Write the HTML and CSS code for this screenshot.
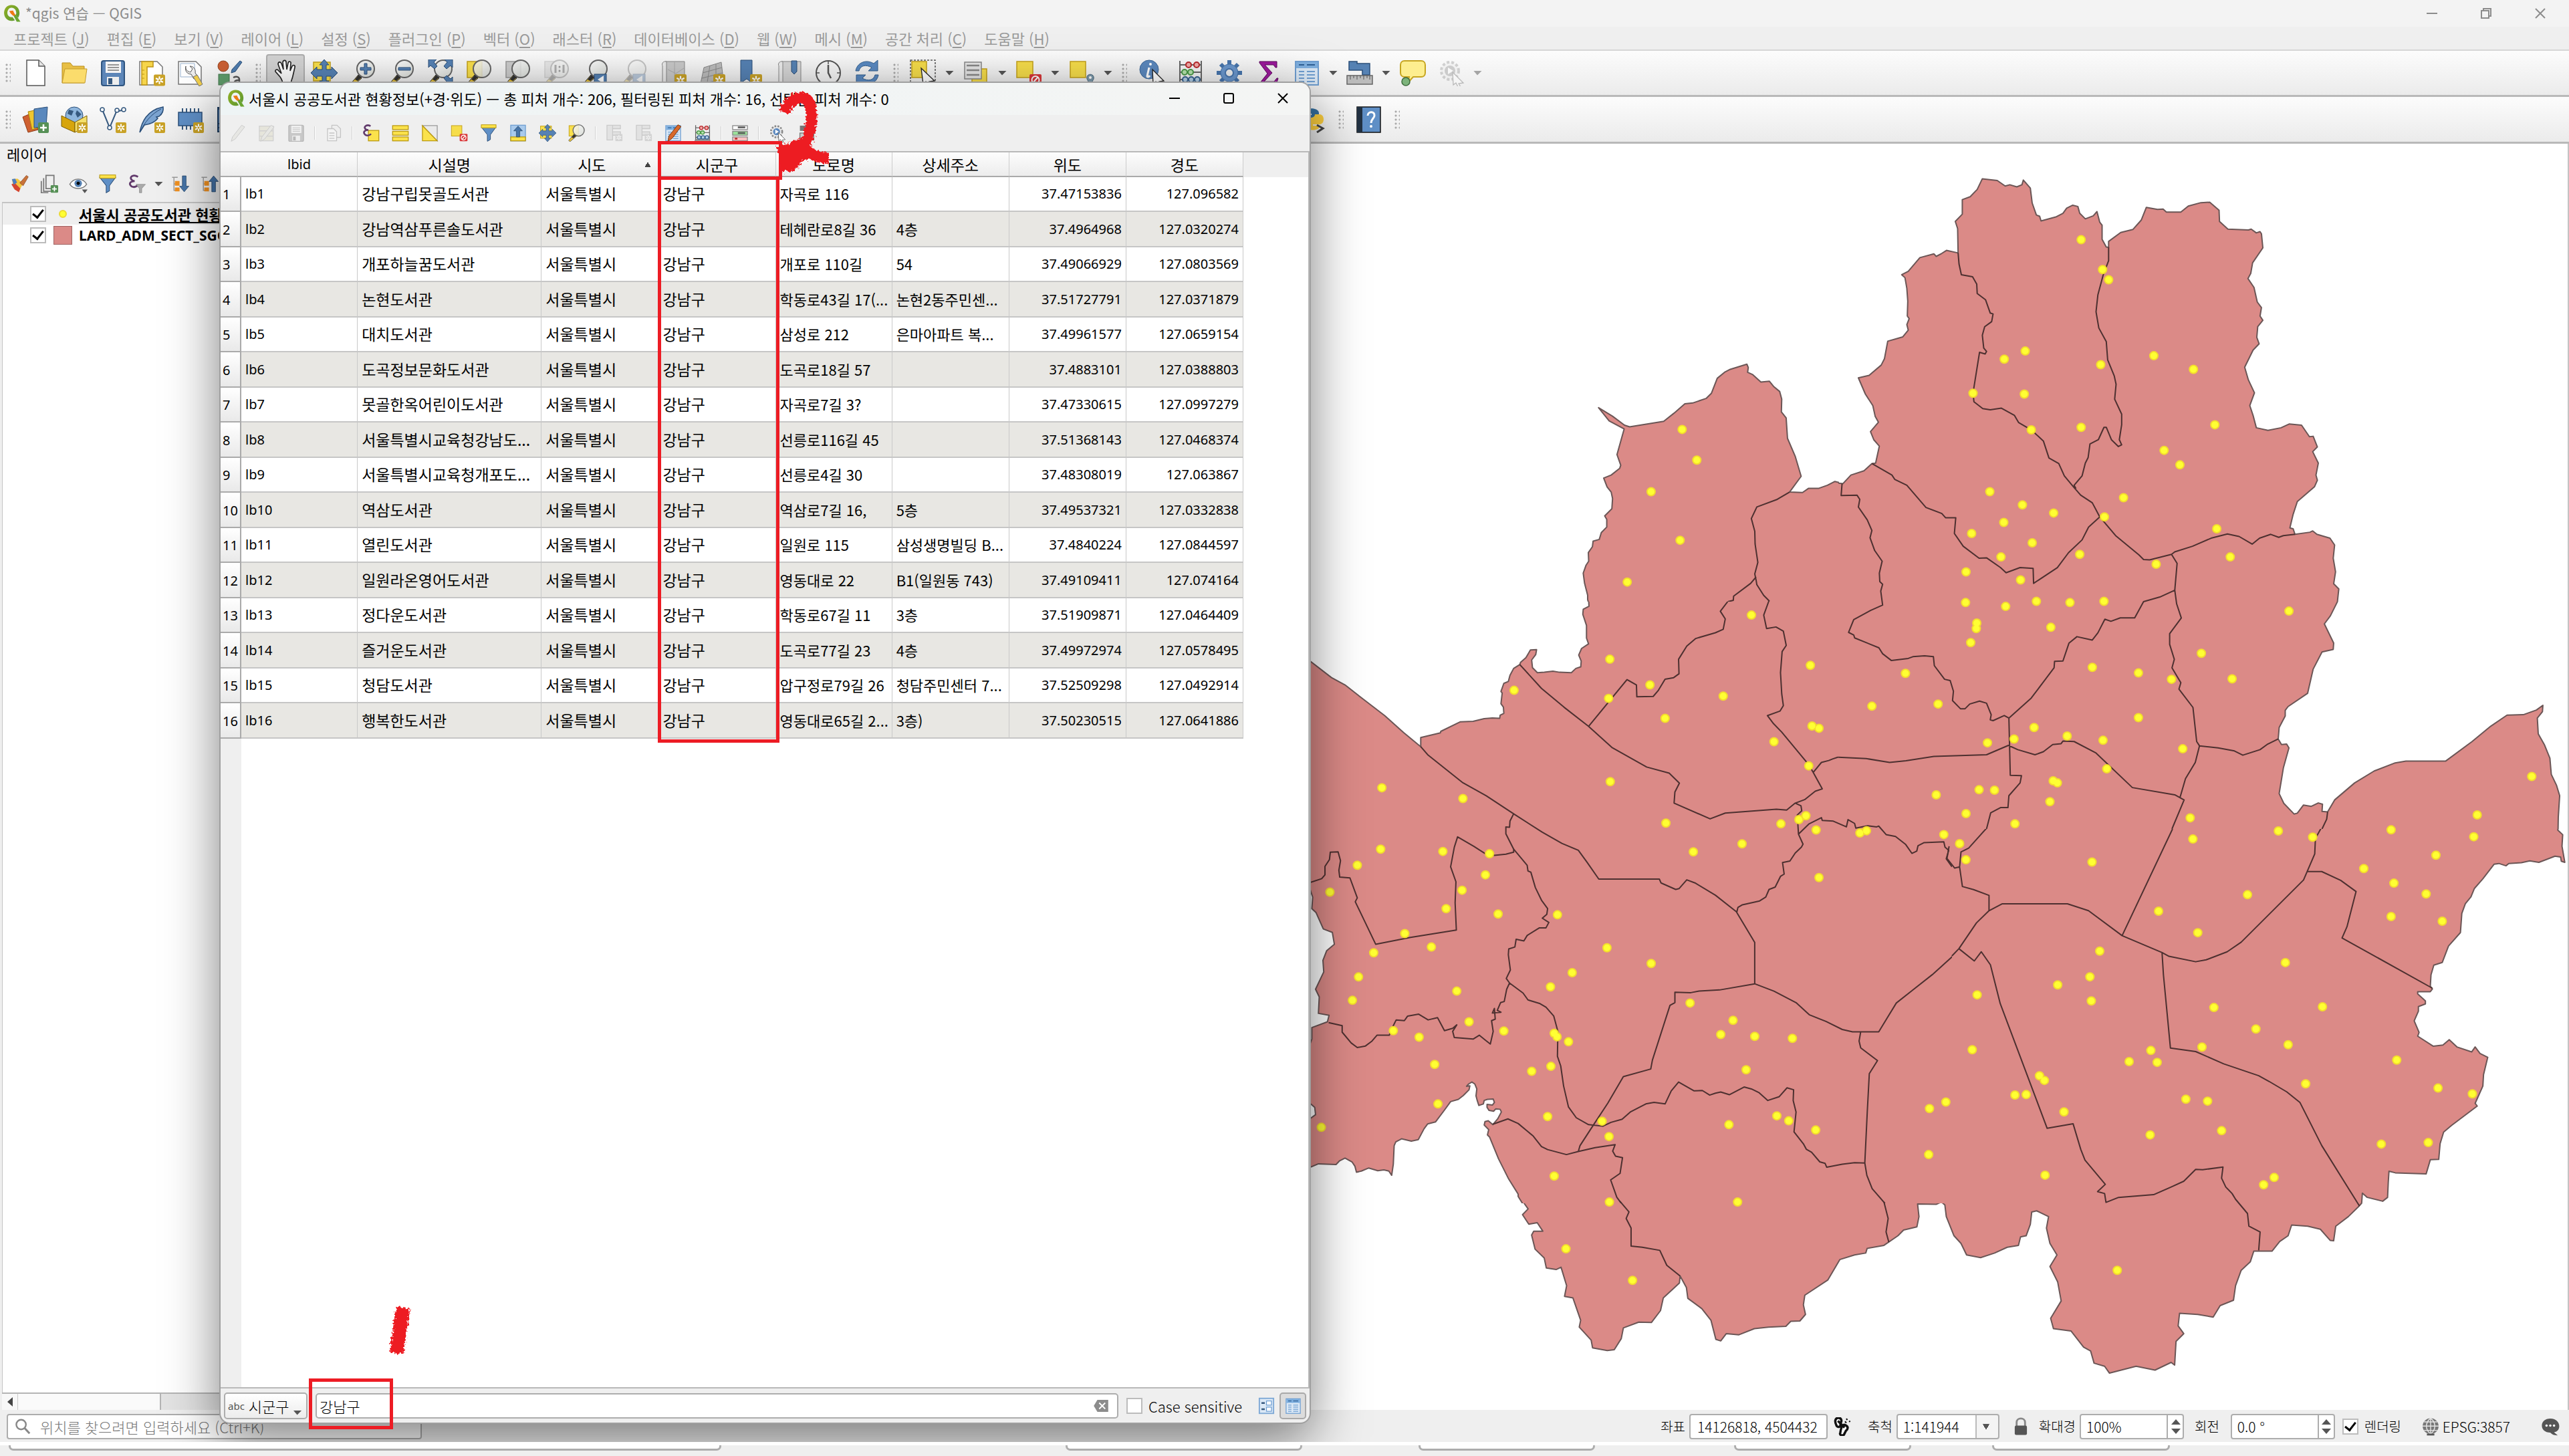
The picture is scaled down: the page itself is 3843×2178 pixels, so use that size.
FILE: index.html
```html
<!DOCTYPE html>
<html lang="ko">
<head>
<meta charset="utf-8">
<title>*qgis 연습 — QGIS</title>
<link rel="stylesheet" href="styles.css">
</head>
<body>
<svg class="sprite" aria-hidden="true">
  <defs>
    <linearGradient id="g-lens" x1="0" y1="0" x2="1" y2="1"><stop offset="0" stop-color="#fdfdfd"/><stop offset="1" stop-color="#d5d9d3"/></linearGradient>
    <linearGradient id="g-q" x1="0" y1="0" x2="1" y2="1"><stop offset="0" stop-color="#93b023"/><stop offset="1" stop-color="#589632"/></linearGradient>
    <filter id="chalk" x="-20%" y="-20%" width="140%" height="140%"><feTurbulence type="fractalNoise" baseFrequency="0.3" numOctaves="2" seed="4" result="n"/><feDisplacementMap in="SourceGraphic" in2="n" scale="9"/></filter>
    <symbol id="q" viewBox="0 0 40 40"><path d="M19 2C9 2 3 10 3 19s6 17 16 17c3 0 5-.500 7-1.500L21 28c-6 1-11-3-11-9s4-11 9-11 10 4 10 11c0 2-.4 3-1 4.500l5 6C35 26 36 23 36 19 36 9 29 2 19 2z" fill="url(#g-q)"/><path d="M22 23h6l10 15h-8z" fill="#6aa52f"/><path d="M14 15l8-1 3 6 3 4-6 1-5-5z" fill="#ee7913"/></symbol>
    <symbol id="star" viewBox="0 0 16 16"><rect width="16" height="16" rx="2" fill="#c9a227"/><path d="M8 2.500v11M3 5.200l10 5.600M13 5.200L3 10.800" stroke="#fff" stroke-width="2"/><circle cx="8" cy="8" r="1.500" fill="#c9a227"/></symbol>
    <symbol id="new" viewBox="0 0 40 40"><path d="M7 1h18l9 9v29H7z" fill="#fff" stroke="#555" stroke-width="1.500"/><path d="M25 1v9h9" fill="#e4e4e4" stroke="#555" stroke-width="1.500"/></symbol>
    <symbol id="open" viewBox="0 0 40 40"><path d="M2 35V5h12l4 5h17v25z" fill="#e8bf45" stroke="#b98d1d"/><path d="M2 35l4-21h33l-3 21z" fill="#fbdc6c" stroke="#c49b2c"/></symbol>
    <symbol id="save" viewBox="0 0 40 40"><rect x="3" y="2" width="34" height="37" rx="3" fill="#5d86b8" stroke="#2f5580" stroke-width="2"/><rect x="9" y="3" width="23" height="17" fill="#f4f4f4"/><path d="M12 8h17M12 12h17M12 16h17" stroke="#777" stroke-width="1.500"/><rect x="11" y="26" width="18" height="12" fill="#eee"/><rect x="13" y="28" width="6" height="9" fill="#36597f"/></symbol>
    <symbol id="layout" viewBox="0 0 40 40"><path d="M2 3h26l8 8v27H2z" fill="#fff" stroke="#777" stroke-width="1.500"/><path d="M5 3h17v8H13v27H5z" fill="#f6d54a" stroke="#bd9415" stroke-width="1.500"/><path d="M5 16h4M5 22h4M5 28h4" stroke="#bd9415"/><use href="#star" x="23" y="22" width="17" height="18"/></symbol>
    <symbol id="manager" viewBox="0 0 40 40"><path d="M2 3h26l8 8v26H2z" fill="#fff" stroke="#777" stroke-width="1.500"/><path d="M5 6h21v20H5z" fill="none" stroke="#9bb3cf"/><path d="M13 10c-1 6 3 8 7 9l3-5-4-4c6 0 9 5 8 10l4 6-6 3-4-7c-6 0-10-5-8-12z" fill="#eee" stroke="#555"/><path d="M24 26l6-3 8 14-5 3z" fill="#f3d04b" stroke="#777"/></symbol>
    <symbol id="style" viewBox="0 0 40 40"><circle cx="11" cy="10" r="8" fill="#cb5f33" stroke="#93431f"/><path d="M36 2l3 2-10 14-6 2 1-5z" fill="#4f7db0" stroke="#2b4f79"/><rect x="4" y="22" width="16" height="16" fill="#5f9c6b" stroke="#41744b"/><path d="M26 27c6-3 9 0 9 3v8M35 31c-9-1-9 7-4 6 3 0 4-2 4-3" fill="none" stroke="#555" stroke-width="2.500"/></symbol>
    <symbol id="pan" viewBox="0 0 40 40"><path d="M12 26L5 18c-1-3 3-4 5-1l4 4L9 7c0-4 4-4 5-1l3 9-1-11c1-4 5-3 5 0l1 11 2-10c1-3 5-2 4 1l-1 11 3-7c2-3 5-1 4 2l-3 13c-1 5-3 7-3 12H16c0-5-2-8-4-11z" fill="#fff" stroke="#222" stroke-width="1.600"/></symbol>
    <symbol id="arrows" viewBox="0 0 40 40"><path d="M20 0l7 8h-4v7h8v-4l9 9-9 9v-4h-8v7h4l-7 8-7-8h4v-7H9v4l-9-9 9-9v4h8V8h-4z" fill="#5682b4" stroke="#2b4f79"/></symbol>
    <symbol id="pansel" viewBox="0 0 40 40"><rect x="4" y="4" width="25" height="28" fill="#f9e04c" stroke="#c3a11a" stroke-width="1.500"/><use href="#arrows" width="40" height="40"/></symbol>
    <symbol id="lens" viewBox="0 0 40 40"><path d="M13 23L1 37l3 3 14-12z" fill="#e8c33b" stroke="#333"/><path d="M14 22l-6 8 4 2 7-6z" fill="#333"/><circle cx="24" cy="14" r="13" fill="url(#g-lens)" fill-opacity=".85" stroke="#666" stroke-width="2"/></symbol>
    <symbol id="zin" viewBox="0 0 40 40"><use href="#lens"/><path d="M22 6h4v6h6v4h-6v6h-4v-6h-6v-4h6z" fill="#5682b4" stroke="#2b4f79"/></symbol>
    <symbol id="zout" viewBox="0 0 40 40"><use href="#lens"/><path d="M15 12h18v4H15z" fill="#5682b4" stroke="#2b4f79"/></symbol>
    <symbol id="zfull" viewBox="0 0 40 40"><use href="#lens"/><path d="M2 0h12l-4 4 5 6-4 4-6-5-3 3zM38 0H26l4 4-5 6 4 4 6-5 3 3zM38 38H26l4-4-5-6 4-4 6 5 3-3z" fill="#5682b4" stroke="#2b4f79"/></symbol>
    <symbol id="zsel" viewBox="0 0 40 40"><rect x="2" y="3" width="22" height="24" fill="#f9e04c" stroke="#c3a11a" stroke-width="1.500"/><use href="#lens"/></symbol>
    <symbol id="zlay" viewBox="0 0 40 40"><rect x="2" y="3" width="22" height="24" fill="#ccc" stroke="#999" stroke-width="1.500"/><use href="#lens"/></symbol>
    <symbol id="znat" viewBox="0 0 40 40"><use href="#zlay"/><path d="M18 8v12M30 8v12" stroke="#333" stroke-width="3"/><circle cx="24" cy="11" r="1.500"/><circle cx="24" cy="17" r="1.500"/></symbol>
    <symbol id="zlast" viewBox="0 0 40 40"><use href="#lens"/><rect x="18" y="22" width="18" height="16" fill="#5682b4" stroke="#2b4f79"/><path d="M32 24l-9 6 9 6z" fill="#fff"/></symbol>
    <symbol id="map" viewBox="0 0 40 40"><path d="M8 3h29v34H8z" fill="#c9c9c9" stroke="#888"/><path d="M8 3C3 3 3 9 4 9v29h6V3z" fill="#ececec" stroke="#888"/><path d="M12 15l12 6 12-8M22 4v33" stroke="#aaa" fill="none"/><use href="#star" x="22" y="22" width="18" height="18"/></symbol>
    <symbol id="map3d" viewBox="0 0 40 40"><path d="M8 12l26-8 3 26-34 6z" fill="#bcbcbc" stroke="#888"/><path d="M6 20l29-8M5 28l31-8M17 9l-4 25M26 7l0 26" stroke="#8b8b8b" fill="none"/><use href="#star" x="22" y="22" width="18" height="18"/></symbol>
    <symbol id="mark" viewBox="0 0 40 40"><path d="M5 1h17v34l-8-6-9 6z" fill="#5682b4" stroke="#2b4f79"/><use href="#star" x="19" y="22" width="18" height="18"/></symbol>
    <symbol id="marks" viewBox="0 0 40 40"><path d="M8 3h29v34H8z" fill="#d6d6d6" stroke="#888"/><path d="M8 3C3 3 3 9 4 9v29h6V3z" fill="#ececec" stroke="#888"/><path d="M23 2h8v16l-4 4-4-4z" fill="#5682b4" stroke="#2b4f79"/></symbol>
    <symbol id="clock" viewBox="0 0 40 40"><circle cx="20" cy="20" r="18" fill="#f6f6f6" stroke="#555" stroke-width="2"/><path d="M20 8v12l4 8" fill="none" stroke="#555" stroke-width="2.500"/><path d="M20 3v4M20 33v4M3 20h4M33 20h4" stroke="#555" stroke-width="1.500"/></symbol>
    <symbol id="refresh" viewBox="0 0 40 40"><path d="M3 17C5 5 18-1 30 6l6-5v16H22l5-5C18 7 10 9 8 17zM37 23c-2 12-15 18-27 11l-6 5V23h14l-5 5c9 5 17 3 19-5z" fill="#5a8ac2" stroke="#35618f"/></symbol>
    <symbol id="select" viewBox="0 0 40 40"><path d="M1 1h37v37H1z" fill="none" stroke="#555" stroke-width="1.500" stroke-dasharray="3 2"/><rect x="3" y="3" width="22" height="24" fill="#f6dd4a" stroke="#c3a11a" stroke-width="1.500"/><path d="M17 13l20 19-8 1 4 8h-4l-5-8-4 4z" fill="#fff" stroke="#222" stroke-width="1.300"/></symbol>
    <symbol id="form" viewBox="0 0 40 40"><path d="M14 14h22v22H14z" fill="#f6dd4a" stroke="#c3a11a" stroke-width="1.500"/><path d="M3 4h25v25H3z" fill="#e5e5e5" stroke="#888" stroke-width="1.500"/><path d="M6 9h19M6 16h19M6 23h19" stroke="#888" stroke-width="2.500"/></symbol>
    <symbol id="desel" viewBox="0 0 40 40"><rect x="2" y="3" width="24" height="24" fill="#f6dd4a" stroke="#c3a11a" stroke-width="1.500"/><rect x="21" y="22" width="18" height="17" rx="2" fill="#d9383a"/><circle cx="30" cy="30.500" r="5.500" fill="none" stroke="#fff" stroke-width="2"/><path d="M26 35l8-9" stroke="#fff" stroke-width="2"/></symbol>
    <symbol id="selloc" viewBox="0 0 40 40"><rect x="3" y="3" width="23" height="24" fill="#f6dd4a" stroke="#c3a11a" stroke-width="1.500"/><path d="M33 39l-5-10c-2-9 12-9 10 0z" fill="#7d9aac" stroke="#4e6c80"/><circle cx="33" cy="27" r="2" fill="#fff"/></symbol>
    <symbol id="info" viewBox="0 0 40 40"><circle cx="16" cy="15" r="14" fill="#5b88be" stroke="#3b6799"/><path d="M16 12l-3 13c0 2 3 1 4-1" fill="none" stroke="#fff" stroke-width="3"/><circle cx="18" cy="7" r="2" fill="#fff"/><path d="M21 15l17 17-7 1 3 7h-4l-4-7-4 4z" fill="#fff" stroke="#222" stroke-width="1.300"/></symbol>
    <symbol id="abacus" viewBox="0 0 40 40"><path d="M4 2v34M36 2v34M4 8h32M4 19h32M4 30h32" stroke="#666" stroke-width="2" fill="none"/><path d="M2 39l2-5h32l2 5z" fill="#999" stroke="#666"/><g fill="#f3aaa8" stroke="#b9282b" stroke-width="2"><circle cx="17" cy="8" r="4"/><circle cx="29" cy="8" r="4"/></g><g fill="#b7e2ae" stroke="#4a9a48" stroke-width="2"><circle cx="11" cy="19" r="4"/><circle cx="20" cy="19" r="4"/></g><g fill="#b3cfe6" stroke="#35618f" stroke-width="2"><circle cx="12" cy="30" r="4"/><circle cx="21" cy="30" r="4"/><circle cx="30" cy="30" r="4"/></g></symbol>
    <symbol id="gear" viewBox="0 0 40 40"><g stroke="#4775ad" stroke-width="6"><path d="M20 1v38M1 20h38M7 7l26 26M33 7L7 33"/></g><circle cx="20" cy="20" r="13" fill="#6b97cd" stroke="#4775ad"/><circle cx="20" cy="20" r="6" fill="#efefef" stroke="#4775ad" stroke-width="2"/></symbol>
    <symbol id="sigma" viewBox="0 0 40 40"><path d="M7 3h26v9h-2l-3-4H15l11 12-12 13h15l4-5h2l-3 10H7v-2l12-15L7 5z" fill="#9c1a9c" stroke="#5d0b5d"/></symbol>
    <symbol id="table" viewBox="0 0 40 40"><rect x="3" y="3" width="34" height="35" fill="#dce9f6" stroke="#6f9fd2" stroke-width="2"/><rect x="4" y="4" width="32" height="9" fill="#7fb0e0"/><path d="M8 8h8M20 8h12" stroke="#2f6096" stroke-width="2"/><path d="M8 18h8M20 18h12M8 23h8M20 23h12M8 28h8M20 28h12M8 33h8M20 33h12" stroke="#6f9fd2" stroke-width="2"/></symbol>
    <symbol id="ruler" viewBox="0 0 40 40"><path d="M4 3h12v3h19v17H24v-7H4z" fill="#5682b4" stroke="#2b4f79" stroke-width="1.500"/><path d="M1 24h38v13H1z" fill="#bcbcbc" stroke="#666" stroke-width="1.500"/><path d="M6 24v6M11 24v4M16 24v6M21 24v4M26 24v6M31 24v4M35 24v6" stroke="#555"/></symbol>
    <symbol id="tip" viewBox="0 0 40 40"><path d="M8 2h25c4 0 6 3 6 6v12c0 4-3 6-6 6H21l-8 9 2-9H8c-4 0-6-3-6-6V8c0-3 2-6 6-6z" fill="#fdee8f" stroke="#c6a520" stroke-width="2"/><circle cx="10" cy="33" r="6" fill="#7cb37b" stroke="#3d6b3d" stroke-width="1.500"/></symbol>
    <symbol id="run" viewBox="0 0 40 40"><circle cx="18" cy="17" r="13" fill="#e9e9e9" stroke="#888" stroke-width="4" stroke-dasharray="4 3"/><circle cx="18" cy="17" r="8" fill="#5b88be"/><path d="M15 12l8 5-8 5z" fill="#fff"/><path d="M22 19l16 16-7 1 3 5h-4l-3-6-4 3z" fill="#fff" stroke="#555" stroke-width="1.300"/></symbol>
    <symbol id="dsm" viewBox="0 0 40 40"><path d="M1 16l14-6 9 25-15 4z" fill="#cf6030" stroke="#8e3b17"/><path d="M9 8l15-3 3 26-12 4z" fill="#efc62f" stroke="#a98410"/><path d="M18 4l20-3-2 29-18 2z" fill="#5a88bd" stroke="#2b4f79"/><rect x="24" y="24" width="16" height="16" rx="2" fill="#569056"/><path d="M32 27v10M27 32h10" stroke="#fff" stroke-width="2.500"/></symbol>
    <symbol id="gpkg" viewBox="0 0 40 40"><circle cx="20" cy="14" r="13" fill="#8fb6dd" stroke="#2b4f79"/><path d="M12 5l7 2-3 7-6-3zM24 6l7 6-6 5-3-6z" fill="#36597f"/><path d="M1 14l20 10v15L1 30z" fill="#d7a50d" stroke="#7c5e05"/><path d="M21 24l18-10v15L21 39z" fill="#f4e06c" stroke="#7c5e05"/><use href="#star" x="24" y="24" width="16" height="16"/></symbol>
    <symbol id="shp" viewBox="0 0 40 40"><path d="M4 5l11 27L25 8l12-3" fill="none" stroke="#36597f" stroke-width="2"/><g fill="#fff" stroke="#36597f" stroke-width="1.500"><circle cx="4" cy="5" r="3"/><circle cx="15" cy="32" r="3"/><circle cx="26" cy="6" r="3"/><circle cx="36" cy="5" r="3"/></g><use href="#star" x="24" y="24" width="16" height="16"/></symbol>
    <symbol id="feather" viewBox="0 0 40 40"><path d="M2 39C5 24 12 6 37 1c1 6-2 11-6 14l-4 1 2 2c-5 7-13 9-20 10z" fill="#7ba3d0" stroke="#2b4f79" stroke-width="1.500"/><path d="M3 38C9 25 18 12 34 4" fill="none" stroke="#2b4f79"/><use href="#star" x="24" y="24" width="16" height="16"/></symbol>
    <symbol id="chip" viewBox="0 0 40 40"><path d="M8 3v32M14 3v32M20 3v32M26 3v32M32 3v32" stroke="#36597f" stroke-width="2"/><rect x="2" y="9" width="35" height="20" fill="#5f8fc6" stroke="#2b4f79" stroke-width="1.500"/><use href="#star" x="24" y="24" width="16" height="16"/></symbol>
    <symbol id="grid" viewBox="0 0 40 40"><rect x="3" y="2" width="34" height="36" fill="#5a88bd" stroke="#203f61" stroke-width="2"/><path d="M3 2l17 18L37 2M3 26h34M3 32h34" stroke="#203f61" stroke-width="2" fill="none"/></symbol>
    <symbol id="py" viewBox="0 0 40 40"><path d="M8 10c0-9 22-9 22 0v8c0 5-14 1-14 9H8C1 27 1 13 8 13h11v-2H8z" fill="#36709f"/><path d="M32 28c0 10-22 10-22 0v-7c0-6 14-1 14-9h7c8 0 8 15 0 15H21v2h11z" fill="#fdcf3f"/><path d="M27 28l9 5-9 6" fill="none" stroke="#444" stroke-width="3"/></symbol>
    <symbol id="help" viewBox="0 0 40 40"><rect x="3" y="1" width="35" height="38" fill="#5f8fc6" stroke="#111" stroke-width="1.500"/><rect x="3" y="1" width="8" height="38" fill="#223142"/><path d="M19 14c0-7 11-7 10 0 0 4-5 5-5 11" fill="none" stroke="#fff" stroke-width="3"/><circle cx="24" cy="30" r="2" fill="#fff"/></symbol>
    <symbol id="pencil" viewBox="0 0 40 40"><path d="M30 2l7 4-22 28-9 5 3-10z" fill="#d9d9d0" stroke="#888" stroke-width="1.500"/></symbol>
    <symbol id="multi" viewBox="0 0 40 40"><path d="M3 4h32v34H3zM3 15h32M3 27h32" fill="#d8d4b8" stroke="#999" stroke-width="2"/><use href="#pencil"/></symbol>
    <symbol id="copy" viewBox="0 0 40 40"><path d="M16 2h12l8 8v20H16z" fill="#eee" stroke="#777" stroke-width="2"/><path d="M6 10h14l7 7v21H6z" fill="#fff" stroke="#777" stroke-width="2"/><path d="M10 20h12M10 26h12M10 32h12" stroke="#777" stroke-width="2"/></symbol>
    <symbol id="eps" viewBox="0 0 40 40"><rect x="14" y="14" width="24" height="24" fill="#fbe24b" stroke="#bb9a10" stroke-width="2"/><path d="M19 4C10-1 4 5 6 9c1 3 4 4 8 4-9 0-12 5-9 9 3 5 11 5 15 0" fill="none" stroke="#613a6b" stroke-width="4"/></symbol>
    <symbol id="rows" viewBox="0 0 40 40"><g fill="#fbe24b" stroke="#bb9a10" stroke-width="2"><rect x="2" y="3" width="36" height="9"/><rect x="2" y="16" width="36" height="9"/><rect x="2" y="29" width="36" height="9"/></g></symbol>
    <symbol id="invert" viewBox="0 0 40 40"><path d="M3 3h34v35z" fill="#eaeaea" stroke="#999" stroke-width="2"/><path d="M3 3v35h34z" fill="#fbe24b" stroke="#bb9a10" stroke-width="2"/></symbol>
    <symbol id="funnel" viewBox="0 0 40 40"><path d="M3 6l14 18v15l7-4V24L37 6z" fill="#5f8fc6" stroke="#2b4f79" stroke-width="1.500"/><rect x="3" y="1" width="34" height="7" fill="#fbe24b" stroke="#bb9a10" stroke-width="1.500"/></symbol>
    <symbol id="totop" viewBox="0 0 40 40"><rect x="3" y="2" width="34" height="36" fill="#a9caec" stroke="#6f9fd2" stroke-width="2"/><rect x="3" y="29" width="34" height="9" fill="#fbe24b" stroke="#bb9a10" stroke-width="2"/><path d="M20 4l10 11h-6v14h-8V15h-6z" fill="#4674a8" stroke="#203f61"/></symbol>
    <symbol id="col" viewBox="0 0 40 40"><path d="M3 2h13v34H3zM16 2h18v8H16zM16 17h18v8H16z" fill="#ccc" stroke="#888" stroke-width="2"/><use href="#star" x="22" y="22" width="17" height="17"/></symbol>
    <symbol id="tedit" viewBox="0 0 40 40"><use href="#table"/><path d="M31 1l7 4-20 27-10 7 2-12z" fill="#d9692b" stroke="#7a330b" stroke-width="1.500"/></symbol>
    <symbol id="cond" viewBox="0 0 40 40"><g stroke="#888" stroke-width="2"><rect x="3" y="3" width="34" height="9" fill="#fff"/><rect x="3" y="16" width="34" height="9" fill="#9be29b"/><rect x="3" y="29" width="34" height="9" fill="#fbc1c1"/></g><path d="M15 7h17M15 20h17" stroke="#555" stroke-width="4"/><path d="M8 33h6" stroke="#b9282b" stroke-width="4"/></symbol>
    <symbol id="dock" viewBox="0 0 40 40"><rect x="4" y="3" width="32" height="12" fill="#777"/><rect x="4" y="20" width="32" height="16" fill="#ccc" stroke="#777" stroke-width="2"/></symbol>
    <symbol id="brush" viewBox="0 0 40 40"><path d="M4 10l12-1 12 10-9 17L8 30z" fill="#f3c53f"/><path d="M3 21l7-3 12 12-3 8-9-6z" fill="#d4452f"/><path d="M4 10l7-1 4 8-7 5z" fill="#4c7fc0"/><path d="M35 2l4 3-11 19-7-6z" fill="#c9733a" stroke="#83401d"/></symbol>
    <symbol id="addgrp" viewBox="0 0 40 40"><path d="M14 2h17v28H14zM9 8v28h15M4 14v25h15" fill="none" stroke="#777" stroke-width="2.500"/><rect x="24" y="23" width="16" height="16" rx="2" fill="#569056"/><path d="M32 26v10M27 31h10" stroke="#fff" stroke-width="2.500"/></symbol>
    <symbol id="eye" viewBox="0 0 40 40"><path d="M2 21C10 6 30 6 38 21 30 33 10 33 2 21z" fill="#fff" stroke="#777" stroke-width="2"/><circle cx="20" cy="19" r="8" fill="#5682b4"/><circle cx="20" cy="19" r="3.500"/><path d="M28 32h12l-6 8z" fill="#555"/></symbol>
    <symbol id="epsf" viewBox="0 0 40 40"><path d="M22 5C12-1 5 5 7 9c1 3 4 5 8 5-9 0-12 5-9 9 3 5 11 5 15 0" fill="none" stroke="#613a6b" stroke-width="4"/><path d="M18 21h20l-8 9v9h-5v-9z" fill="#aaa" stroke="#888"/></symbol>
    <symbol id="expand" viewBox="0 0 40 40"><path d="M2 6h12M6 6v28h10M6 20h8" fill="none" stroke="#999" stroke-width="2"/><path d="M8 14h10v10H8zM8 28h10v8H8z" fill="#f09020"/><path d="M24 3h8v22h6L28 37 18 25h6z" fill="#4674a8" stroke="#203f61"/></symbol>
    <symbol id="collapse" viewBox="0 0 40 40"><path d="M2 6h12M6 6v28h10M6 20h8" fill="none" stroke="#999" stroke-width="2"/><path d="M8 14h10v10H8zM8 28h10v8H8z" fill="#f09020"/><path d="M24 37h8V15h6L28 3 18 15h6z" fill="#4674a8" stroke="#203f61"/></symbol>
    <symbol id="mag" viewBox="0 0 40 40"><circle cx="16" cy="15" r="12" fill="none" stroke="#888" stroke-width="4"/><path d="M25 24l12 13" stroke="#888" stroke-width="5"/></symbol>
    <symbol id="formview" viewBox="0 0 40 40"><rect x="3" y="2" width="34" height="36" fill="#dce9f6" stroke="#7fa9d6" stroke-width="3"/><path d="M8 13h8M8 28h8" stroke="#36597f" stroke-width="4"/><path d="M20 8h12v10H20zM20 23h12v10H20z" fill="#fff" stroke="#6f9fd2" stroke-width="2"/></symbol>
    <symbol id="foot" viewBox="0 0 40 40"><path d="M12 1c7 0 9 6 6 11l-1 7c-2 3-7 2-8-1C5 10 5 3 12 1zM25 16c9 2 10 8 4 13l-4 8c-4 4-10 1-8-4 1-7 3-16 8-17z" fill="#fff" stroke="#111" stroke-width="5"/><path d="M12 8l14 14" stroke="#111" stroke-width="5"/><path d="M30 3l2 3M36 8l2 2M27 9l3 3" stroke="#111" stroke-width="3"/></symbol>
    <symbol id="lock" viewBox="0 0 40 40"><path d="M11 19V11c0-11 18-11 18 0v8" fill="none" stroke="#888" stroke-width="4"/><rect x="7" y="18" width="26" height="20" rx="3" fill="#555"/></symbol>
    <symbol id="globe" viewBox="0 0 40 40"><circle cx="20" cy="19" r="17" fill="#777"/><path d="M3 19h34M6 10h28M6 28h28M20 2v34M20 2c-12 10-12 24 0 34 12-10 12-24 0-34" fill="none" stroke="#e5e5e5" stroke-width="2"/><path d="M12 37h16" stroke="#555" stroke-width="4"/></symbol>
    <symbol id="bubble" viewBox="0 0 40 40"><path d="M20 3c24 0 24 28 8 29l8 7c-9 0-13-3-16-6C-4 33-4 3 20 3z" fill="#555"/><g fill="#fff"><circle cx="12" cy="18" r="2.500"/><circle cx="20" cy="18" r="2.500"/><circle cx="28" cy="18" r="2.500"/></g></symbol>
  </defs>
</svg>

<div class="app">
  <header class="titlebar main-title">
    <svg class="logo"><use href="#q"/></svg>
    <span class="title">*qgis 연습 — QGIS</span>
    <button class="win" aria-label="최소화"><svg viewBox="0 0 20 20"><path d="M2 10h16"/></svg></button>
    <button class="win" aria-label="복원"><svg viewBox="0 0 20 20"><path d="M3 6h11v11H3zM6 6V3h11v11h-3"/></svg></button>
    <button class="win" aria-label="닫기"><svg viewBox="0 0 20 20"><path d="M3 3l14 14M17 3L3 17"/></svg></button>
  </header>
  <nav class="menubar">
    <button>프로젝트 (<u>J</u>)</button><button>편집 (<u>E</u>)</button><button>보기 (<u>V</u>)</button><button>레이어 (<u>L</u>)</button><button>설정 (<u>S</u>)</button><button>플러그인 (<u>P</u>)</button><button>벡터 (<u>O</u>)</button><button>래스터 (<u>R</u>)</button><button>데이터베이스 (<u>D</u>)</button><button>웹 (<u>W</u>)</button><button>메시 (<u>M</u>)</button><button>공간 처리 (<u>C</u>)</button><button>도움말 (<u>H</u>)</button>
  </nav>
  <div class="toolbar">
    <i class="grip"></i>
    <button class="tool" aria-label="새 프로젝트"><svg><use href="#new"/></svg></button>
    <button class="tool" aria-label="열기"><svg><use href="#open"/></svg></button>
    <button class="tool" aria-label="저장"><svg><use href="#save"/></svg></button>
    <button class="tool" aria-label="새 조판"><svg><use href="#layout"/></svg></button>
    <button class="tool" aria-label="조판 관리자"><svg><use href="#manager"/></svg></button>
    <button class="tool" aria-label="스타일 관리자"><svg><use href="#style"/></svg></button>
    <i class="grip"></i>
    <button class="tool on" aria-label="맵 이동"><svg><use href="#pan"/></svg></button>
    <button class="tool" aria-label="선택 영역으로 이동"><svg><use href="#pansel"/></svg></button>
    <button class="tool" aria-label="확대"><svg><use href="#zin"/></svg></button>
    <button class="tool" aria-label="축소"><svg><use href="#zout"/></svg></button>
    <button class="tool" aria-label="전체 보기"><svg><use href="#zfull"/></svg></button>
    <button class="tool" aria-label="선택 영역 확대"><svg><use href="#zsel"/></svg></button>
    <button class="tool" aria-label="레이어 확대"><svg><use href="#zlay"/></svg></button>
    <button class="tool off" aria-label="원본 해상도"><svg><use href="#znat"/></svg></button>
    <button class="tool" aria-label="이전 보기"><svg><use href="#zlast"/></svg></button>
    <button class="tool off" aria-label="다음 보기"><svg><use href="#zlast"/></svg></button>
    <button class="tool" aria-label="새 맵 뷰"><svg><use href="#map"/></svg></button>
    <button class="tool" aria-label="새 3D 맵 뷰"><svg><use href="#map3d"/></svg></button>
    <button class="tool" aria-label="새 북마크"><svg><use href="#mark"/></svg></button>
    <button class="tool" aria-label="북마크"><svg><use href="#marks"/></svg></button>
    <button class="tool" aria-label="시간 제어"><svg><use href="#clock"/></svg></button>
    <button class="tool" aria-label="새로 고침"><svg><use href="#refresh"/></svg></button>
    <i class="grip"></i>
    <button class="tool" aria-label="피처 선택"><svg><use href="#select"/></svg></button><i class="drop"></i>
    <button class="tool" aria-label="값으로 선택"><svg><use href="#form"/></svg></button><i class="drop"></i>
    <button class="tool" aria-label="선택 해제"><svg><use href="#desel"/></svg></button><i class="drop"></i>
    <button class="tool" aria-label="위치로 선택"><svg><use href="#selloc"/></svg></button><i class="drop"></i>
    <i class="grip"></i>
    <button class="tool" aria-label="피처 식별"><svg><use href="#info"/></svg></button>
    <button class="tool" aria-label="필드 계산기"><svg><use href="#abacus"/></svg></button>
    <button class="tool" aria-label="툴박스"><svg><use href="#gear"/></svg></button>
    <button class="tool" aria-label="통계"><svg><use href="#sigma"/></svg></button>
    <button class="tool" aria-label="속성 테이블"><svg><use href="#table"/></svg></button><i class="drop"></i>
    <button class="tool" aria-label="측정"><svg><use href="#ruler"/></svg></button><i class="drop"></i>
    <button class="tool" aria-label="맵 도움말"><svg><use href="#tip"/></svg></button>
    <button class="tool off gray" aria-label="액션 실행"><svg><use href="#run"/></svg></button><i class="drop faint"></i>
  </div>
  <div class="toolbar second">
    <i class="grip"></i>
    <button class="tool" aria-label="데이터 소스 관리자"><svg><use href="#dsm"/></svg></button>
    <button class="tool" aria-label="새 GeoPackage"><svg><use href="#gpkg"/></svg></button>
    <button class="tool" aria-label="새 Shapefile"><svg><use href="#shp"/></svg></button>
    <button class="tool" aria-label="새 SpatiaLite"><svg><use href="#feather"/></svg></button>
    <button class="tool" aria-label="임시 레이어"><svg><use href="#chip"/></svg></button>
    <button class="tool" aria-label="가상 레이어"><svg><use href="#grid"/></svg></button>
    <span class="under"></span>
    <button class="tool" aria-label="파이썬 콘솔"><svg><use href="#py"/></svg></button>
    <i class="grip"></i>
    <button class="tool" aria-label="도움말 목차"><svg><use href="#help"/></svg></button>
    <i class="grip"></i>
  </div>

  <main class="work">
    <aside class="layers">
      <h2>레이어</h2>
      <div class="layer-tools">
        <button aria-label="스타일"><svg><use href="#brush"/></svg></button>
        <button aria-label="그룹 추가"><svg><use href="#addgrp"/></svg></button>
        <button aria-label="맵 테마"><svg><use href="#eye"/></svg></button>
        <button aria-label="범례 필터"><svg><use href="#funnel"/></svg></button>
        <button aria-label="표현식 필터"><svg><use href="#epsf"/></svg></button><i class="drop"></i>
        <button aria-label="모두 펼치기"><svg><use href="#expand"/></svg></button>
        <button aria-label="모두 접기"><svg><use href="#collapse"/></svg></button>
      </div>
      <div class="tree">
        <label class="layer current"><input type="checkbox" class="check" checked><span class="sym"><i class="pt"></i></span><b><u>서울시 공공도서관 현황정보(+경·위도)</u></b></label>
        <label class="layer"><input type="checkbox" class="check" checked><span class="sym"><i class="area"></i></span><b>LARD_ADM_SECT_SGG</b></label>
      </div>
      <div class="hscroll"><button aria-label="왼쪽"></button><i></i></div>
    </aside>
    <section class="canvas" aria-label="맵 캔버스">
      <svg class="map" viewBox="560 215 3281 1894" preserveAspectRatio="xMaxYMin meet">
        <g class="land">
          <svg x="2200" y="1240" width="1643" height="860" viewBox="0 70 1568 1498" preserveAspectRatio="none"><path d="M1553 60L1552 73 1559 85 1558 115 1562 157 1557 154 1556 143 1548 141 1525 157 1512 153 1500 158 1482 160 1478 166 1468 160 1461 162 1445 200 1433 225 1428 247 1420 265 1415 290 1413 340 1396 375 1387 418 1375 425 1371 450 1370 480 1373 487 1370 494 1352 494 1352 500 1363 518 1363 526 1353 533 1353 545 1347 570 1354 600 1352 610 1374 636 1388 633 1397 619 1408 638 1429 651 1434 638 1441 655 1452 665 1446 710 1445 740 1434 785 1437 792 1400 843 1389 860 1384 890 1382 931 1370 932 1364 969 1320 966 1311 962 1310 990 1309 1030 1302 1040 1280 1030 1273 1019 1272 1045 1267 1055 1253 1080 1235 1105 1232 1143 1227 1142 1213 1113 1195 1105 1172 1102 1167 1130 1155 1145 1144 1170 1118 1170 1113 1198 1100 1220 1092 1260 1089 1298 1070 1312 1060 1342 1038 1335 1012 1332 1010 1365 1018 1385 1007 1405 1005 1467 1000 1460 977 1480 950 1470 912 1488 905 1470 890 1462 885 1430 875 1420 857 1378 832 1372 828 1345 843 1300 838 1250 827 1210 837 1180 827 1150 822 1110 825 1080 808 1065 801 1068 799 1100 793 1130 785 1133 782 1155 766 1160 748 1175 728 1187 708 1180 700 1150 690 1130 679 1080 677 1050 672 1042 665 1048 638 1047 640 1080 637 1107 618 1115 610 1130 590 1155 566 1163 564 1175 548 1180 527 1192 510 1245 477 1285 475 1310 478 1335 470 1352 457 1353 450 1366 425 1368 405 1372 383 1388 365 1385 357 1404 350 1400 343 1350 330 1320 310 1293 308 1265 299 1235 298 1253 275 1292 271 1325 258 1356 240 1355 218 1370 215 1398 205 1427 195 1429 174 1422 172 1402 155 1368 157 1350 146 1292 134 1288 137 1260 129 1212 122 1218 108 1214 105 1188 92 1165 87 1128 90 1118 103 1118 95 1096 83 1100 74 1075 82 1060 75 1042 300 1000 300 60z"/></svg>
          <svg x="1960" y="900" width="960" height="900" viewBox="0 0 1568 1568" preserveAspectRatio="none"><path d="M-10 145L0 155 52 198 85 217 133 257 182 297 228 341 270 378 270 354 318 342 319 338 367 313 398 312 425 305 445 303 463 304 464 296 473 291 472 275 466 266 469 238 466 234 473 213 484 208 488 192 497 174 512 164 514 158 527 146 538 126 553 125 551 138 541 152 543 172 555 185 572 184 593 181 609 184 638 185 649 174 661 170 662 155 656 139 663 122 680 110 675 95 675 62 666 33 667 20 681 12 680-10 1600-10 1600 1600 525 1600 518 1567 508 1550 508 1544 485 1505 460 1452 438 1395 433 1390 436 1376 425 1364 427 1355 435 1353 446 1363 458 1348 467 1330 464 1323 453 1322 448 1328 437 1326 432 1318 432 1310 445 1312 450 1305 447 1296 433 1297 425 1300 423 1309 412 1313 408 1300 405 1288 407 1270 402 1257 395 1252 387 1257 382 1263 390 1262 388 1272 374 1287 362 1297 343 1303 328 1325 306 1356 287 1361 278 1374 264 1402 247 1406 223 1400 209 1408 205 1418 203 1466 199 1495 192 1484 180 1481 165 1483 143 1476 125 1484 113 1487 109 1471 102 1460 85 1450 72 1457 63 1467 20 1465 0 1474-10 1474-10 1350 0 1347 13 1337 11 1318 0 1308-10 1308-10 1180 4 1140 4 1110 42 1095 46 1078 20 1073 22 1030 13 1010 33 965 31 935 40 910 59 893 54 862 32 853 14 810 4 800 6 770-5 735z"/></svg>
          <svg x="2300" y="240" width="451" height="660" viewBox="0 0 884 1035" preserveAspectRatio="none"><path d="M128 1060L130 1052 152 1046 147 1030 147 1020 138 992 134 968 142 950 150 940 149 920 161 906 163 893 181 889 187 873 203 860 203 842 197 834 218 817 220 793 216 778 204 766 194 745 216 738 241 722 244 715 233 690 254 630 210 611 179 580 220 600 255 621 270 625 370 612 400 593 432 571 455 569 495 558 510 546 527 511 550 496 565 490 614 478 618 486 616 497 630 502 655 520 680 518 692 530 710 542 716 560 715 590 729 604 733 652 756 695 773 741 739 778 777 779 795 769 825 769 850 762 872 753 896 758 1000 741 1000 1100 128 1100z"/></svg>
          <svg x="2750" y="240" width="1093" height="1000" viewBox="0 0 1568 1568" preserveAspectRatio="none"><path d="M-10 756L10 758 27 738 55 728 72 711 80 710 88 670 76 655 69 636 86 614 79 600 74 575 58 548 43 510 66 504 92 480 99 465 106 424 138 414 150 398 147 385 152 371 148 365 149 330 147 300 143 275 136 268 150 260 175 228 205 219 210 225 222 218 232 211 257 217 256 160 251 143 266 126 266 92 283 85 298 68 309 43 341 47 358 60 368 57 383 62 394 57 397 46 412 65 416 100 425 128 432 131 435 142 468 132 482 124 490 112 503 105 514 108 518 124 530 137 547 130 555 120 561 145 566 152 566 185 575 203 580 204 580 190 606 169 632 162 650 140 661 110 685 115 697 114 704 121 735 121 751 107 778 99 797 98 817 117 818 143 836 161 880 163 886 161 897 170 905 167 908 172 911 205 889 240 885 265 879 277 892 298 899 332 908 345 905 365 911 375 900 390 898 415 903 430 890 445 872 485 880 515 893 545 883 575 890 598 897 627 922 633 950 627 968 618 994 621 1011 648 1019 647 1028 672 1018 683 1030 710 1025 738 1028 750 1022 765 985 800 976 830 969 862 976 864 980 877 1012 872 1018 869 1027 877 1055 886 1065 902 1062 933 1067 965 1063 993 1074 1005 1071 1035 1056 1068 1043 1087 1063 1132 1062 1147 1038 1153 1019 1193 1007 1250 965 1281 959 1290 959 1303 946 1330 944 1357 951 1370 962 1369 967 1378 955 1425 946 1485 956 1508 978 1533 985 1531 998 1512 1015 1515 1030 1507 1039 1510 1038 1527 1050 1528 1065 1500 1108 1460 1150 1432 1195 1413 1218 1409 1303 1409 1360 1363 1400 1327 1435 1301 1470 1300 1498 1289 1512 1278 1511 1293 1500 1308 1502 1345 1515 1370 1527 1402 1530 1440 1541 1465 1548 1490 1545 1540 1544 1600-10 1600z"/></svg>
        </g>
        <g class="borders">
          <svg x="1960" y="900" width="960" height="900" viewBox="0 0 1568 1568" preserveAspectRatio="none"><path d="M270 378L288 400 373 472 430 506 497 553 567 601 615 630 655 648 677 680 705 723 853 723 857 733 893 750 901 748 920 725 940 733 990 765 1041 808 1086 888 1086 996 1133 1015 1187 1045 1220 1077 1260 1094 1300 1115 1325 1121 1389 1121 1432 1046 1470 1014 1520 972 1570 924M512 164L565 226 620 275 680 325 737 380 822 431 877 447 902 473 891 496 889 525 977 566 1014 551 1139 541 1164 543 1185 525 1208 516 1234 494 1251 488 1229 445 1218 425 1152 340 1132 318 1117 297 1148 285 1156 271 1152 240 1149 185 1153 130 1163 114 1156 77 1138 66 1115 70 1108 35 1120 0M680 325L774 203 797 217 798 248 838 247 850 232 867 202 888 198 901 188 900 150 920 116 942 96 990 81 1009 72 1014 45 1002 25 1020 0M1229 445L1249 419 1267 414 1276 410 1290 405M1185 525L1199 532 1201 545 1190 556 1193 606 1204 632 1200 640 1185 655 1172 676 1154 680 1158 710 1149 716 1136 744 1121 750 1113 770 1098 780 1056 790 1045 797 1042 810M1193 606L1219 579 1249 563 1251 570 1278 572 1310 587 1314 568 1330 578 1333 590 1362 584 1384 587 1389 585 1407 607 1430 612 1455 633 1470 656 1482 650 1485 636 1500 628 1548 626 1551 640 1560 648 1554 670 1568 691M497 553L488 572 487 588 478 587 478 605 497 645 530 687 532 702 539 705 550 745 565 778 580 800 578 815 567 825 583 836 576 850 560 850 530 870 522 884 503 880 500 900 485 905 484 920 489 960 479 982 487 994 480 1010 474 1042 465 1045 457 1065 466 1070 445 1072 450 1060 452 1088 443 1092 447 1120 440 1153 428 1143 413 1130 398 1140 352 1136 348 1120 358 1103 348 1112 328 1118 311 1084 288 1090 265 1075 238 1080 230 1092 210 1090 203 1105 193 1130 163 1130 150 1146 135 1158 115 1162 100 1150 78 1122 78 1105 45 1097M497 645L497 653 478 658 450 661 428 657 400 638 360 613 352 640 343 691 356 730 354 785 357 856 245 875 160 893 110 782 115 772 97 720 72 718 70 700 74 675 68 652 49 653 47 672 36 690 36 712 28 722 0 732M487 994L520 1020 532 1038 560 1047 576 1057 595 1080 605 1120 604 1185 612 1210 619 1262 631 1317 650 1345 680 1363 715 1367 735 1357 762 1349 782 1330 820 1309 840 1305 867 1309 882 1275 900 1252 938 1275 958 1274 976 1286 990 1281 1003 1278 1024 1285 1060 1265 1078 1270 1097 1280 1118 1300 1146 1290 1165 1267 1181 1272 1180 1300 1187 1330 1182 1382 1205 1413 1212 1427 1225 1435 1245 1460 1258 1464 1262 1474 1300 1466 1330 1462 1356 1463M1086 996L1000 1012 950 1015 930 1019 891 1018 891 1045 879 1052 836 1195 832 1218 765 1238 727 1307 690 1367 659 1418 655 1433M446 1362L483 1348 508 1360 545 1393 565 1420 580 1428 626 1441 655 1433 696 1423 745 1415 739 1432 746 1445 763 1449 757 1490 734 1507 749 1552 760 1568M1345 1121L1341 1145 1345 1163 1386 1196 1366 1230 1361 1330 1355 1463 1360 1495 1373 1530 1404 1568"/></svg>
          <svg x="2300" y="240" width="451" height="660" viewBox="0 0 884 1035" preserveAspectRatio="none"><path d="M739 778L703 795 643 813 627 840 637 870 638 900 646 943 637 970 641 985 643 995 663 1020 679 1033 663 1060M641 977L625 992 575 1022 574 1032 558 1035"/></svg>
          <svg x="2750" y="240" width="1093" height="1000" viewBox="0 0 1568 1568" preserveAspectRatio="none"><path d="M8 758L6 786 40 785 46 795 43 813 62 843 72 868 68 885 78 915 94 940 88 968 89 988 95 994 91 1010 95 1043 70 1055 33 1077 22 1107 33 1113 35 1120 87 1143 95 1157 114 1173 150 1168 160 1164 185 1162 204 1164 206 1185 228 1217 240 1220 247 1245 245 1267 262 1286 272 1286 282 1275 303 1268 318 1273 328 1300 326 1312 332 1314 356 1302 366 1308 414 1261 463 1190 464 1175 482 1174 495 1132 512 1117 545 1125 557 1108 572 1076 585 1081 605 1073 636 1073 655 1035 690 1024 722 1008M72 711L115 738 121 748 147 762 188 814 222 828 230 838 252 838 249 875 268 905 302 933 318 932 348 955 360 967 390 955 418 957 419 992 470 955 494 920 523 890 537 860 561 836M257 217L259 243 264 268 288 273 297 290 298 312 316 327 326 358 332 360 329 378 314 390 309 410 312 440 318 448 315 454 303 450 289 546 291 566 310 582 326 585 350 581 378 598 387 615 414 632 440 658 452 698 473 711 485 740 505 766 520 785 545 803 561 836 595 880 645 925 655 936 668 937 715 924 722 918 760 905 800 886 835 876 860 882 888 900 904 886 928 877 945 884 955 880 980 877M580 204L580 235 568 270 557 315 553 355 559 393 575 425 578 468 592 505 596 525 593 560 608 595 608 620 603 655 608 667 601 671 586 655 575 626 570 626 558 655 540 665 536 697 530 710 523 740 506 762 510 770M715 924L727 945 722 1008 726 1040 736 1073 711 1110 711 1135 721 1170 716 1190 735 1225 731 1240 761 1283 769 1363 775 1373 766 1412 745 1450 733 1495M775 1373L815 1378 850 1385 868 1395 905 1382 920 1370 944 1357M0 1400L60 1403 110 1412 145 1408 205 1398 318 1394 365 1372 385 1382 422 1394 440 1387 460 1370 478 1368 482 1362 506 1363 553 1390 631 1471 722 1488 742 1500 716 1568M366 1308L369 1442 393 1443 390 1460 366 1490 364 1518 348 1518 327 1530 318 1568M1050 1528L1048 1545 1038 1568"/></svg>
          <svg x="2200" y="1240" width="1643" height="860" viewBox="0 70 1568 1498" preserveAspectRatio="none"><path d="M683 115L680 147 691 172 698 169 702 220 718 228 740 243 740 283 722 315 697 382 687 401M698 169L700 130 711 120 737 67M740 283L759 265 852 265 882 283 930 348 987 392 997 402 1035 416 1050 411 1080 390 1100 365 1189 203 1205 135 1206 95 1218 55M930 348L1002 70M1195 181L1215 181 1242 204 1264 233 1251 325 1244 354 1373 485M987 392L989 450 999 641 1035 650 1075 682 1125 713 1140 728 1165 755 1184 783 1215 895 1269 1053M697 382L719 414 729 390 742 424 756 525 823 850 860 838 871 905 877 933 906 996 895 1015 905 1020 907 1043 925 1030 975 1023 1000 1003 1018 988 1035 957 1045 958 1074 951 1072 980 1078 1003 1087 1020 1092 1035 1109 1072 1111 1105 1127 1120 1125 1168M590 1042L596 1085 593 1120 597 1147M213 1040L226 1068 222 1085 229 1110 229 1157 245 1160 270 1168 280 1207 299 1235"/></svg>
        </g>
        <g class="dots"><g id="libraries">
          <svg x="1960" y="900" width="960" height="900" viewBox="0 0 1568 1568" preserveAspectRatio="none"><path d="M1078 35h.1M732 150h.1M830 217h.1M729 252h.1M498 231h.1M867 304h.1M1009 246h.1M1222 166h.1M1226 324h.1M1243 330h.1M1133 365h.1M1218 428h.1M733 469h.1M869 577h.1M1150 579h.1M1194 568h.1M1211 558h.1M1236 595h.1M1055 631h.1M936 652h.1M1343 603h.1M1359 597h.1M1243 719h.1M175 485h.1M373 513h.1M172 645h.1M324 651h.1M438 657h.1M115 687h.1M428 712h.1M48 757h.1M371 752h.1M332 800h.1M459 814h.1M604 816h.1M231 865h.1M296 900h.1M155 915h.1M118 978h.1M103 1039h.1M358 1015h.1M725 902h.1M833 943h.1M640 967h.1M587 1004h.1M388 1095h.1M203 1118h.1M266 1135h.1M473 1119h.1M596 1125h.1M603 1134h.1M631 1147h.1M928 1046h.1M1033 1091h.1M1003 1128h.1M1086 1133h.1M1178 1138h.1M1065 1220h.1M304 1206h.1M541 1224h.1M588 1211h.1M312 1309h.1M27 1370h.1M580 1342h.1M713 1354h.1M730 1394h.1M1023 1363h.1M1140 1340h.1M1169 1353h.1M1235 1377h.1M1553 1304h.1M1513 1321h.1M1511 1441h.1M596 1497h.1M1548 607h.1"/></svg>
          <svg x="2300" y="240" width="451" height="660" viewBox="0 0 884 1035" preserveAspectRatio="none"><path d="M424 631h.1M467 703h.1M333 777h.1M418 891h.1M263 989h.1"/></svg>
          <svg x="2750" y="240" width="1093" height="1000" viewBox="0 0 1568 1568" preserveAspectRatio="none"><path d="M521 186h.1M567 256h.1M580 280h.1M401 447h.1M356 466h.1M289 546h.1M399 548h.1M414 632h.1M521 626h.1M563 479h.1M677 458h.1M762 490h.1M808 620h.1M699 680h.1M733 714h.1M612 791h.1M571 836h.1M812 864h.1M841 930h.1M325 777h.1M395 808h.1M462 827h.1M355 849h.1M286 875h.1M416 897h.1M349 930h.1M274 965h.1M518 924h.1M682 947h.1M391 984h.1M273 1037h.1M359 1046h.1M425 1034h.1M497 1037h.1M570 1034h.1M297 1085h.1M296 1098h.1M284 1131h.1M456 1095h.1M967 1057h.1M779 1156h.1M845 1216h.1M545 1189h.1M644 1202h.1M715 1217h.1M644 1307h.1M739 1380h.1M420 1330h.1M491 1350h.1M568 1360h.1M377 1357h.1M320 1366h.1M576 1427h.1M461 1455h.1M470 1460h.1M454 1504h.1M302 1476h.1M335 1477h.1M274 1532h.1M379 1556h.1M210 1488h.1M144 1203h.1M72 1280h.1M214 1275h.1M755 1542h.1M1488 1445h.1M1371 1535h.1"/></svg>
          <svg x="2200" y="1200" width="1643" height="900" viewBox="0 0 1568 1568" preserveAspectRatio="none"><path d="M698 108h.1M707 150h.1M887 156h.1M1031 96h.1M1153 75h.1M1202 91h.1M1314 72h.1M1432 90h.1M1378 138h.1M1275 173h.1M1318 211h.1M1364 239h.1M1314 298h.1M1387 310h.1M1109 241h.1M982 284h.1M1038 340h.1M898 388h.1M884 455h.1M838 476h.1M886 518h.1M723 502h.1M716 645h.1M1163 418h.1M1061 535h.1M1216 533h.1M1121 591h.1M1167 632h.1M1044 638h.1M971 647h.1M940 676h.1M980 678h.1M812 713h.1M819 725h.1M777 763h.1M793 762h.1M847 807h.1M1192 734h.1M1021 774h.1M1052 779h.1M970 867h.1M1072 856h.1M1322 672h.1M1381 745h.1M1430 760h.1M1300 891h.1M1367 887h.1M820 972h.1M1147 978h.1M1132 997h.1M923 1220h.1M198 1042h.1M381 1042h.1M136 1164h.1M231 1246h.1"/></svg>
        </g></g>
        <use href="#libraries" class="dot-core"/>
      </svg>
    </section>
  </main>

  <footer class="status">
    <label class="locator"><svg><use href="#mag"/></svg><input type="text" aria-label="위치 찾기" placeholder="위치를 찾으려면 입력하세요 (Ctrl+K)"></label>
    <span class="grow"></span>
    <label for="coord">좌표</label><input id="coord" class="box coord" type="text" value="14126818, 4504432">
    <svg class="si"><use href="#foot"/></svg>
    <label for="scale" class="wide">축척</label><select id="scale" class="box scale"><option>1:141944</option></select>
    <svg class="si"><use href="#lock"/></svg>
    <label for="zoom">확대경</label><span class="spin"><input id="zoom" type="text" value="100%"><i></i></span>
    <label for="rot" class="rot">회전</label><span class="spin"><input id="rot" type="text" value="0.0 °"><i></i></span>
    <label class="render"><input type="checkbox" class="check" checked>렌더링</label>
    <button class="crs"><svg class="si"><use href="#globe"/></svg>EPSG:3857</button>
    <button class="msg" aria-label="메시지"><svg class="si"><use href="#bubble"/></svg></button>
  </footer>

  <section class="dialog" role="dialog" aria-label="속성 테이블">
    <header class="titlebar">
      <svg class="logo"><use href="#q"/></svg>
      <span class="title">서울시 공공도서관 현황정보(+경·위도) — 총 피처 개수: 206, 필터링된 피처 개수: 16, 선택한 피처 개수: 0</span>
      <button class="win" aria-label="최소화"><svg viewBox="0 0 20 20"><path d="M2 10h16"/></svg></button>
      <button class="win" aria-label="최대화"><svg viewBox="0 0 20 20"><rect x="3" y="3" width="14" height="14" rx="2"/></svg></button>
      <button class="win" aria-label="닫기"><svg viewBox="0 0 20 20"><path d="M3 3l14 14M17 3L3 17"/></svg></button>
    </header>
    <div class="attr-tools">
      <button class="off" aria-label="편집"><svg><use href="#pencil"/></svg></button>
      <button class="off" aria-label="다중 편집"><svg><use href="#multi"/></svg></button>
      <button class="off gray" aria-label="저장"><svg><use href="#save"/></svg></button>
      <i class="sep"></i>
      <button class="off" aria-label="복사"><svg><use href="#copy"/></svg></button>
      <i class="sep"></i>
      <button aria-label="표현식으로 선택"><svg><use href="#eps"/></svg></button>
      <button aria-label="모두 선택"><svg><use href="#rows"/></svg></button>
      <button aria-label="선택 반전"><svg><use href="#invert"/></svg></button>
      <button aria-label="선택 해제"><svg><use href="#desel"/></svg></button>
      <button aria-label="필터"><svg><use href="#funnel"/></svg></button>
      <button aria-label="맨 위로"><svg><use href="#totop"/></svg></button>
      <button aria-label="이동"><svg><use href="#pansel"/></svg></button>
      <button aria-label="확대"><svg><use href="#zsel"/></svg></button>
      <i class="sep"></i>
      <button class="off gray" aria-label="새 필드"><svg><use href="#col"/></svg></button>
      <button class="off gray" aria-label="필드 삭제"><svg><use href="#col"/></svg></button>
      <button aria-label="필드 정리"><svg><use href="#tedit"/></svg></button>
      <button aria-label="필드 계산기"><svg><use href="#abacus"/></svg></button>
      <i class="sep"></i>
      <button aria-label="조건부 서식"><svg><use href="#cond"/></svg></button>
      <i class="sep"></i>
      <button aria-label="액션"><svg><use href="#run"/></svg></button>
      <button aria-label="도킹"><svg><use href="#dock"/></svg></button>
    </div>
    <div class="grid">
      <table>
        <colgroup><col class="c0"><col class="c1"><col class="c2"><col class="c3"><col class="c3"><col class="c1"><col class="c3"><col class="c3"><col class="c3"></colgroup>
        <thead><tr><th></th><th>lbid</th><th>시설명</th><th><span class="sorted">시도</span></th><th>시군구</th><th>도로명</th><th>상세주소</th><th>위도</th><th>경도</th></tr></thead>
        <tbody>
          <tr><th>1</th><td>lb1</td><td>강남구립못골도서관</td><td>서울특별시</td><td>강남구</td><td>자곡로 116</td><td></td><td>37.47153836</td><td>127.096582</td></tr>
          <tr><th>2</th><td>lb2</td><td>강남역삼푸른솔도서관</td><td>서울특별시</td><td>강남구</td><td>테헤란로8길 36</td><td>4층</td><td>37.4964968</td><td>127.0320274</td></tr>
          <tr><th>3</th><td>lb3</td><td>개포하늘꿈도서관</td><td>서울특별시</td><td>강남구</td><td>개포로 110길</td><td>54</td><td>37.49066929</td><td>127.0803569</td></tr>
          <tr><th>4</th><td>lb4</td><td>논현도서관</td><td>서울특별시</td><td>강남구</td><td>학동로43길 17(...</td><td>논현2동주민센...</td><td>37.51727791</td><td>127.0371879</td></tr>
          <tr><th>5</th><td>lb5</td><td>대치도서관</td><td>서울특별시</td><td>강남구</td><td>삼성로 212</td><td>은마아파트 복...</td><td>37.49961577</td><td>127.0659154</td></tr>
          <tr><th>6</th><td>lb6</td><td>도곡정보문화도서관</td><td>서울특별시</td><td>강남구</td><td>도곡로18길 57</td><td></td><td>37.4883101</td><td>127.0388803</td></tr>
          <tr><th>7</th><td>lb7</td><td>못골한옥어린이도서관</td><td>서울특별시</td><td>강남구</td><td>자곡로7길 3?</td><td></td><td>37.47330615</td><td>127.0997279</td></tr>
          <tr><th>8</th><td>lb8</td><td>서울특별시교육청강남도...</td><td>서울특별시</td><td>강남구</td><td>선릉로116길 45</td><td></td><td>37.51368143</td><td>127.0468374</td></tr>
          <tr><th>9</th><td>lb9</td><td>서울특별시교육청개포도...</td><td>서울특별시</td><td>강남구</td><td>선릉로4길 30</td><td></td><td>37.48308019</td><td>127.063867</td></tr>
          <tr><th>10</th><td>lb10</td><td>역삼도서관</td><td>서울특별시</td><td>강남구</td><td>역삼로7길 16,</td><td>5층</td><td>37.49537321</td><td>127.0332838</td></tr>
          <tr><th>11</th><td>lb11</td><td>열린도서관</td><td>서울특별시</td><td>강남구</td><td>일원로 115</td><td>삼성생명빌딩 B...</td><td>37.4840224</td><td>127.0844597</td></tr>
          <tr><th>12</th><td>lb12</td><td>일원라온영어도서관</td><td>서울특별시</td><td>강남구</td><td>영동대로 22</td><td>B1(일원동 743)</td><td>37.49109411</td><td>127.074164</td></tr>
          <tr><th>13</th><td>lb13</td><td>정다운도서관</td><td>서울특별시</td><td>강남구</td><td>학동로67길 11</td><td>3층</td><td>37.51909871</td><td>127.0464409</td></tr>
          <tr><th>14</th><td>lb14</td><td>즐거운도서관</td><td>서울특별시</td><td>강남구</td><td>도곡로77길 23</td><td>4층</td><td>37.49972974</td><td>127.0578495</td></tr>
          <tr><th>15</th><td>lb15</td><td>청담도서관</td><td>서울특별시</td><td>강남구</td><td>압구정로79길 26</td><td>청담주민센터 7...</td><td>37.52509298</td><td>127.0492914</td></tr>
          <tr><th>16</th><td>lb16</td><td>행복한도서관</td><td>서울특별시</td><td>강남구</td><td>영동대로65길 2...</td><td>3층)</td><td>37.50230515</td><td>127.0641886</td></tr>
        </tbody>
      </table>
    </div>
    <footer class="filter">
      <button class="field"><small>abc</small>시군구<i class="drop"></i></button>
      <span class="query"><input type="text" aria-label="필터 값" value="강남구"><button aria-label="지우기"><svg viewBox="0 0 24 20"><path d="M6 0h18v20H6L0 10z" fill="#8c8c8c"/><path d="M9 5l10 10M19 5L9 15" stroke="#fff" stroke-width="2"/></svg></button></span>
      <label class="case"><input type="checkbox" class="check">Case sensitive</label>
      <button class="view" aria-label="폼 보기"><svg><use href="#formview"/></svg></button>
      <button class="view on" aria-label="테이블 보기"><svg><use href="#table"/></svg></button>
    </footer>
    <i class="mark head-mark"></i>
    <i class="mark col-mark"></i>
    <i class="mark query-mark"></i>
    <svg class="ink ink-two" viewBox="0 0 90 130" aria-hidden="true"><path d="M13 34C20 12 46 2 52 24c6 24-2 52-17 74C26 116 18 118 16 108c-4-22 18-28 34-14 8 6 18 8 30 8"/><path d="M12 92l24-10 4 16-24 14z"/></svg>
    <svg class="ink ink-one" viewBox="0 0 50 90" aria-hidden="true"><path d="M29 12L19 80"/></svg>
  </section>
</div>
<div class="lower-edge" aria-hidden="true"><i class="e1"></i><i class="e2"></i><i class="e3"></i><i class="e4"></i><i class="e5"></i></div>
</body>
</html>
```
FILE: styles.css
```css
* { box-sizing: border-box; }
body {
  margin: 0;
  min-height: 100vh;
  display: flex;
  flex-direction: column;
  background: #efefef;
  color: #000;
  font: 23px/32px "Noto Sans CJK KR", "Noto Sans", sans-serif;
}
button, input, select { font: inherit; color: inherit; margin: 0; }
button { border: 0; background: none; padding: 0; white-space: nowrap; }
i { display: block; flex: none; }
svg { display: block; flex: none; }
.sprite { position: absolute; width: 0; height: 0; }
.app {
  position: relative;
  flex: 1;
  display: flex;
  flex-direction: column;
  overflow: hidden;
  border-bottom: 3px solid #fff;
}

/* title bars */
.titlebar { display: flex; align-items: center; height: 40px; background: #f3f3f3; }
.logo { width: 28px; height: 32px; margin: 0 6px 0 4px; }
.title { flex: 1; white-space: nowrap; font-size: 22px; }
.main-title { color: #8c8c8c; padding-right: 3px; }
.main-title .title { font-size: 21px; padding-bottom: 2px; }
.win { width: 81px; height: 40px; display: grid; place-items: center; }
.win svg { width: 20px; height: 20px; fill: none; stroke: currentColor; stroke-width: 2; }

/* menu */
.menubar {
  display: flex;
  height: 36px;
  gap: 26px;
  padding: 0 20px;
  color: #9a9a9a;
  border-bottom: 2px solid #d6d6d6;
  font-size: 22px;
}
.menubar u { text-underline-offset: 3px; }

/* toolbars */
.toolbar {
  display: flex;
  align-items: center;
  height: 69px;
  background: linear-gradient(#fcfcfc, #ebebeb);
  border-bottom: 3px solid #b9b9b9;
}
.second { height: 70px; }
.grip {
  width: 9px;
  height: 30px;
  margin: 0 8px 0 9px;
  background: radial-gradient(circle, #a9a9a9 1px, transparent 2px) 0 0 / 6px 6px;
}
.grip:first-child { margin-left: 7px; }
.tool { width: 58px; height: 56px; display: grid; place-items: center; border-radius: 4px; flex: none; }
.tool svg { width: 40px; height: 40px; }
.tool.on { background: #d4d4d4; border: 2px solid #b0b0b0; }
.off { opacity: .35; }
.gray svg { filter: grayscale(1); }
.drop { width: 21px; height: 7px; background: #555; clip-path: polygon(4px 0, 17px 0, 10px 7px); }
.faint { opacity: .5; }
.under { width: 1562px; flex: none; }

/* work area */
.work { flex: 1; display: flex; min-height: 0; }
.layers { width: 560px; display: flex; flex-direction: column; border-left: 3px solid #efefef; }
.layers h2 { margin: 0; padding: 0 7px; font-size: 22px; font-weight: 400; height: 33px; line-height: 30px; }
.layer-tools { display: flex; align-items: center; height: 54px; padding-left: 4px; }
.layer-tools button { width: 44px; display: grid; place-items: center; }
.layer-tools svg { width: 28px; height: 28px; }
.tree { flex: 1; background: #fff; border-top: 2px solid #c4c4c4; border-left: 1px solid #c4c4c4; }
.layer { display: flex; align-items: center; height: 32px; padding-left: 41px; white-space: nowrap; font-size: 22px; }
.layer b { font-family: "Noto Sans", "Noto Sans CJK KR", sans-serif; font-size: 21px; width: 211px; overflow: hidden; }
.current { background: #efefef; }
.current b { font-family: "Noto Sans CJK KR", sans-serif; font-size: 22px; }
.sym { width: 49px; display: grid; place-items: center; }
.pt { width: 12px; height: 12px; border-radius: 50%; background: #ffff33; border: 2px solid #ecd930; }
.area { width: 28px; height: 28px; background: #db8a87; border: 1px solid #a06463; }
.check {
  appearance: none;
  width: 24px;
  height: 24px;
  flex: none;
  background: #fff;
  border: 2px solid #bcbcbc;
  display: grid;
  place-items: center;
}
.check:checked::before { content: ""; width: 7px; height: 13px; border: solid #000; border-width: 0 3px 3px 0; transform: rotate(38deg); margin-bottom: 4px; }
.hscroll { display: flex; height: 26px; background: #e3e3e3; border-top: 2px solid #b4b4b4; }
.hscroll button { width: 24px; background: #f8f8f8; border-right: 1px solid #ccc; display: grid; place-items: center; }
.hscroll button::before { content: ""; border: 7px solid transparent; border-right: 8px solid #444; border-left: 0; }
.hscroll i { width: 214px; background: #fafafa; border-right: 2px solid #b4b4b4; }

/* map */
.canvas { flex: 1; min-width: 0; background: #fff; border-right: 2px solid #c4c4c4; position: relative; }
.map { position: absolute; width: 100%; height: 100%; }
.map path { vector-effect: non-scaling-stroke; stroke-linejoin: round; }
.land { fill: #db8a87; stroke: #6b5656; stroke-width: 2px; }
.borders { fill: none; stroke: #4d3030; stroke-width: 2px; }
.dots { stroke: #f3dc2c; stroke-width: 14px; stroke-linecap: round; }
.dot-core { stroke: #ffff33; stroke-width: 10px; stroke-linecap: round; }

/* status bar */
.status { display: flex; align-items: center; height: 48px; padding: 2px 10px 0; font-size: 21px; font-weight: 300; }
.status label { font-size: 20px; }
.grow { flex: 1; }
.status .locator { display: flex; align-items: center; width: 621px; height: 38px; padding: 0 10px; background: #fff; border: 2px solid #adadad; border-radius: 4px; font-size: 22px; }
.locator svg { width: 24px; height: 24px; margin-right: 14px; }
.locator input { flex: 1; border: 0; padding: 0; background: none; }
.locator input::placeholder { color: #777; opacity: 1; }
.box, .spin { height: 38px; background: #fff; border: 2px solid #adadad; border-radius: 4px; margin: 0 7px 0 6px; padding: 0 8px; }
.coord { width: 207px; padding: 0 10px; }
.si { width: 28px; height: 28px; }
.si + label { margin-left: 13px; }
.si + .wide { margin-left: 25px; }
.rot + .spin { margin-left: 17px; }
.scale { width: 154px; margin-right: 18px; appearance: none; background: conic-gradient(from -30deg at 50% 100%, #555 60deg, transparent 0) 126px 13px / 12px 9px no-repeat, linear-gradient(90deg, transparent 116px, #bbb 116px, #bbb 118px, #f4f4f4 118px), #fff; }
.spin { display: flex; width: 156px; margin-right: 16px; padding-right: 0; }
.spin input { width: 120px; border: 0; padding: 0; background: none; }
.spin i { width: 25px; border-left: 2px solid #adadad; display: grid; place-content: center; gap: 6px; }
.spin i::before { content: ""; border: 7px solid transparent; border-top: 0; border-bottom: 8px solid #555; }
.spin i::after { content: ""; border: 7px solid transparent; border-bottom: 0; border-top: 8px solid #555; }
.spin + .render { margin-left: -5px; }
.render { display: flex; align-items: center; gap: 9px; width: 118px; }
.crs { display: flex; align-items: center; gap: 4px; font-weight: 300; }
.msg { margin: 0 4px 0 46px; }

/* attribute table window */
.dialog {
  position: absolute;
  left: 328px;
  top: 122px;
  bottom: 27px;
  width: 1633px;
  display: flex;
  flex-direction: column;
  background: #efefef;
  border: 2px solid #a0a0a0;
  border-radius: 16px;
  box-shadow: 0 24px 80px rgba(0, 0, 0, .5);
}
.dialog .titlebar { height: 48px; padding-bottom: 2px; background: linear-gradient(90deg, #eef4f5, #f4f5f4); border-radius: 14px 14px 0 0; }
.dialog .logo { margin: 0 5px 0 9px; }
.attr-tools { display: flex; align-items: center; height: 54px; padding-left: 3px; }
.attr-tools button { width: 44px; display: grid; place-items: center; }
.attr-tools svg { width: 26px; height: 28px; }
.sep { width: 2px; height: 20px; margin: 0 5px; background: #fff; border-left: 1px solid #d0d0d0; }
.grid {
  flex: 1;
  background: linear-gradient(90deg, #efefef 31px, transparent 31px), linear-gradient(#efefef 37px, #fff 37px);
  border: solid #b9b9b9;
  border-width: 2px 2px 2px 0;
}
table { table-layout: fixed; width: 1530px; border-collapse: separate; border-spacing: 0; }
.c0 { width: 31px; }
.c1 { width: 174px; }
.c2 { width: 275px; }
.c3 { width: 175px; }
th { font-weight: 400; padding: 0; }
thead th {
  height: 37px;
  background: linear-gradient(#fdfdfd, #ececec);
  border-right: 1px solid #ccc;
  border-bottom: 2px solid #aaa;
  line-height: 30px;
}
thead th:first-child { border-right: 0; }
.sorted { display: flex; justify-content: center; padding-right: 24px; background: conic-gradient(from 150deg at 50% 0, #444 60deg, transparent 0) 152px 11px / 14px 8px no-repeat; }
tbody tr { height: 53px; }
tbody tr:nth-child(odd) { height: 52px; }
tbody tr:nth-child(even) { background: #e8e7e3; }
td { padding: 0 0 2px 6px; border-right: 1px solid #c9c9c9; border-bottom: 2px solid #c6c6c6; white-space: nowrap; overflow: hidden; font-size: 22px; }
td:nth-child(3), td:nth-child(4), td:nth-child(5), thead th { font-size: 23px; }
td:nth-child(8), td:nth-child(9) { text-align: right; padding-right: 6px; }
td:nth-child(2), td:nth-child(8), td:nth-child(9), tbody th, thead th:nth-child(2) { font-family: "Noto Sans", sans-serif; font-size: 20px; }
td:nth-child(2), td:nth-child(8), td:nth-child(9) { padding-bottom: 0; }
tbody th { text-align: left; padding: 2px 0 0 3px; background: linear-gradient(#fff, #e9e9e9); border-right: 2px solid #aaa; border-bottom: 2px solid #aaa; }

.filter { display: flex; align-items: center; height: 51px; padding: 0 5px; font-weight: 300; }
.field { display: flex; align-items: center; width: 125px; height: 40px; padding-left: 4px; border: 2px solid #adadad; border-radius: 5px; background: linear-gradient(#fff, #ececec); font-size: 22px; font-weight: 300; }
.field small { font: 15px/28px "Noto Sans", sans-serif; color: #555; margin-right: 6px; }
.field .drop { align-self: flex-end; margin: 0 0 4px 2px; }
.query { flex: 1; display: flex; align-items: center; height: 38px; margin: 0 12px; padding: 0 12px 0 4px; background: #fff; border: 2px solid #adadad; border-radius: 5px; }
.query input { flex: 1; border: 0; padding: 0; background: none; font-size: 22px; font-weight: 300; }
.query svg { width: 24px; height: 18px; }
.case { display: flex; align-items: center; gap: 9px; width: 189px; white-space: nowrap; font-size: 22px; }
.view { width: 40px; height: 40px; display: grid; place-items: center; border: 2px solid transparent; border-radius: 5px; }
.view.on { background: #dcdcdc; border-color: #a9a9a9; }
.view svg { width: 25px; height: 26px; }

/* red annotations drawn over the window */
.mark { position: absolute; border: 5px solid #ed1c24; }
.head-mark { left: 654px; top: 87px; width: 186px; height: 58px; }
.col-mark { left: 654px; top: 140px; width: 182px; height: 847px; }
.query-mark { left: 132px; bottom: -10px; width: 126px; height: 76px; }
.ink { position: absolute; fill: none; stroke: #ed1c24; filter: url(#chalk); overflow: visible; }
.ink-two { left: 830px; top: 10px; width: 90px; height: 130px; stroke-width: 17px; }
.ink-one { left: 244px; bottom: 94px; width: 50px; height: 90px; stroke-width: 21px; }

/* edge of the window behind */
.lower-edge { display: flex; height: 18px; padding-left: 13px; border-top: 2px solid #fff; }
.lower-edge i { height: 8px; background: #fff; border: 3px solid #adadad; border-top: 0; border-radius: 0 0 7px 7px; }
.e1 { width: 1066px; }
.e2 { width: 354px; margin-left: 515px; }
.e3 { width: 264px; margin-left: 174px; }
.e4 { width: 265px; margin-left: 208px; }
.e5 { width: 266px; margin-left: 121px; }
```
